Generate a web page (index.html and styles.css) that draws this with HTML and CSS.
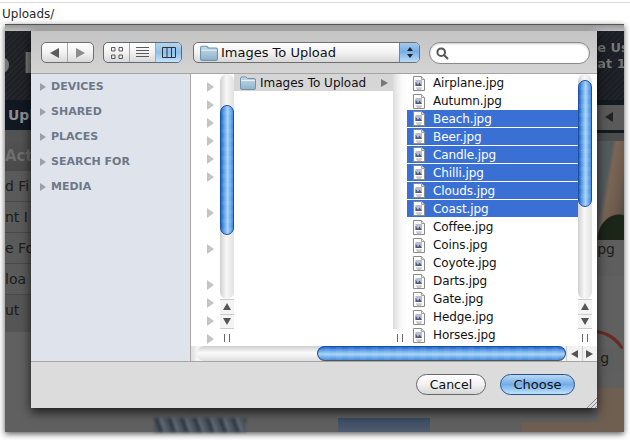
FILE: index.html
```html
<!DOCTYPE html>
<html lang="en">
<head>
<meta charset="utf-8">
<title>Uploads</title>
<link rel="stylesheet" href="styles.css">
</head>
<body>
<svg class="defs" width="0" height="0" aria-hidden="true">
  <defs>
    <linearGradient id="fold" x1="0" y1="0" x2="0" y2="1">
      <stop offset="0" stop-color="#c6dae8"/><stop offset="1" stop-color="#8fb2cb"/>
    </linearGradient>
    <symbol id="folder" viewBox="0 0 16 14">
      <path d="M.5 2.5Q.5 1 2 1H6L7.5 2.5H14Q15.5 2.500 15.500 4V12Q15.500 13.500 14 13.500H2Q.5 13.500 .5 12Z" fill="url(#fold)" stroke="#6f93ad"/>
      <path d="M1 4.500H15" stroke="#e6f0f6"/>
    </symbol>
    <symbol id="file" viewBox="0 0 12 15">
      <path d="M.5.5H8.500L11.500 3.500V14.500H.5Z" fill="#fff" stroke="#8a8a8a"/>
      <path d="M8.500.5V3.500H11.500" fill="#e4e4e4" stroke="#a0a0a0"/>
      <path d="M2.500 4H9V10H2.500Z" fill="#b8bfd0"/>
      <path d="M2.500 5.500L5 9L6.500 6.500L9 10H2.500Z" fill="#4d5a7e"/>
      <path d="M3 12H9M4 13.200H8" stroke="#9a9a9a" stroke-width=".8"/>
    </symbol>
  </defs>
</svg>

<header class="addressbar">Uploads/</header>

<main class="stage">
  <div class="strip"></div>
  <div class="backdrop">
    <aside class="bg-left">
      <div class="bg-logo"><span>o F</span></div>
      <div class="bg-tab">Upl</div>
      <div class="bg-gap"></div>
      <div class="bg-head">Acti</div>
      <div class="bg-row">d Fi</div>
      <div class="bg-row">nt I</div>
      <div class="bg-row">e Fo</div>
      <div class="bg-row">loa</div>
      <div class="bg-row">ut</div>
    </aside>
    <section class="bg-mid">
      <div class="bg-thumb bg-thumb-a"></div>
      <div class="bg-thumb bg-thumb-b"></div>
      <div class="bg-thumb bg-thumb-c"></div>
    </section>
    <aside class="bg-right">
      <div class="bg-promo"><span>e Us</span><span>at 15</span></div>
      <div class="bg-pager"><i class="bg-prev"></i></div>
      <div class="bg-gap-r"></div>
      <div class="bg-photo"></div>
      <div class="bg-cap">pg</div>
      <div class="bg-arc">
        <svg width="27" height="20" viewBox="0 0 27 20"><path d="M0 3Q14 5 24 19Q26 20 26 17Q18 3 0 0Z" fill="#6b2a20"/></svg>
      </div>
      <div class="bg-cap bg-cap-g">g</div>
      <div class="bg-tan"></div>
    </aside>
  </div>

  <div class="dialog">
    <div class="toolbar">
      <div class="seg seg-nav">
        <button class="seg-btn"><i class="tri tri-left"></i></button>
        <button class="seg-btn"><i class="tri tri-right"></i></button>
      </div>
      <div class="seg seg-view">
        <button class="seg-btn">
          <svg width="12" height="12" viewBox="0 0 12 12" fill="none" stroke="#5a5a5a"><path d="M.5.5h3.500v3.500h-3.500zM8 .5h3.500v3.500H8zM.5 8h3.500v3.500h-3.500zM8 8h3.500v3.500H8z"/></svg>
        </button>
        <button class="seg-btn">
          <svg width="13" height="11" viewBox="0 0 13 11" stroke="#5a5a5a"><path d="M0 .5h13M0 3.500h13M0 6.500h13M0 9.500h13"/></svg>
        </button>
        <button class="seg-btn seg-on">
          <svg width="14" height="11" viewBox="0 0 14 11" fill="none" stroke="#333"><path d="M.5.5h13v10H.5zM5 .5v10M9.500 .5v10"/></svg>
        </button>
      </div>
      <div class="popup">
        <svg class="ic-folder" width="18" height="16"><use href="#folder"/></svg>
        <span class="popup-label">Images To Upload</span>
        <span class="stepper"><i class="st-up"></i><i class="st-down"></i></span>
      </div>
      <div class="search">
        <svg width="13" height="13" viewBox="0 0 13 13" fill="none" stroke="#555" stroke-width="2"><circle cx="5.200" cy="5.200" r="3.800"/><path d="M8 8l4 4"/></svg>
      </div>
    </div>

    <div class="body">
      <nav class="sidebar">
        <div class="sb-item"><i class="sb-tri"></i>DEVICES</div>
        <div class="sb-item"><i class="sb-tri"></i>SHARED</div>
        <div class="sb-item"><i class="sb-tri"></i>PLACES</div>
        <div class="sb-item"><i class="sb-tri"></i>SEARCH FOR</div>
        <div class="sb-item"><i class="sb-tri"></i>MEDIA</div>
      </nav>
      <div class="browser">
        <div class="columns">
          <div class="col-chev">
            <i class="chev"></i><i class="chev"></i><i class="chev"></i><i class="chev"></i><i class="chev"></i><i class="chev"></i>
            <i class="chev chev-none"></i><i class="chev"></i><i class="chev chev-none"></i><i class="chev"></i><i class="chev chev-none"></i>
            <i class="chev"></i><i class="chev"></i><i class="chev"></i><i class="chev"></i>
          </div>
          <div class="vscroll">
            <div class="track"><div class="thumb thumb-a"></div></div>
            <div class="arrows"><span class="ar"><i class="ar-up"></i></span><span class="ar"><i class="ar-down"></i></span></div>
            <div class="grip"></div>
          </div>
          <div class="col-folders">
            <div class="folder-row">
              <svg class="ic-folder-s" width="16" height="14"><use href="#folder"/></svg>
              <span class="folder-name">Images To Upload</span>
              <i class="folder-chev"></i>
            </div>
          </div>
          <div class="vscroll vscroll-plain">
            <div class="track track-plain"></div>
            <div class="grip"></div>
          </div>
          <ul class="col-files">
            <li class="file"><svg width="12" height="15"><use href="#file"/></svg>Airplane.jpg</li>
            <li class="file"><svg width="12" height="15"><use href="#file"/></svg>Autumn.jpg</li>
            <li class="file sel"><svg width="12" height="15"><use href="#file"/></svg>Beach.jpg</li>
            <li class="file sel"><svg width="12" height="15"><use href="#file"/></svg>Beer.jpg</li>
            <li class="file sel"><svg width="12" height="15"><use href="#file"/></svg>Candle.jpg</li>
            <li class="file sel"><svg width="12" height="15"><use href="#file"/></svg>Chilli.jpg</li>
            <li class="file sel"><svg width="12" height="15"><use href="#file"/></svg>Clouds.jpg</li>
            <li class="file sel"><svg width="12" height="15"><use href="#file"/></svg>Coast.jpg</li>
            <li class="file"><svg width="12" height="15"><use href="#file"/></svg>Coffee.jpg</li>
            <li class="file"><svg width="12" height="15"><use href="#file"/></svg>Coins.jpg</li>
            <li class="file"><svg width="12" height="15"><use href="#file"/></svg>Coyote.jpg</li>
            <li class="file"><svg width="12" height="15"><use href="#file"/></svg>Darts.jpg</li>
            <li class="file"><svg width="12" height="15"><use href="#file"/></svg>Gate.jpg</li>
            <li class="file"><svg width="12" height="15"><use href="#file"/></svg>Hedge.jpg</li>
            <li class="file"><svg width="12" height="15"><use href="#file"/></svg>Horses.jpg</li>
            <li class="file"><svg width="12" height="15"><use href="#file"/></svg></li>
          </ul>
          <div class="vscroll">
            <div class="track"><div class="thumb thumb-c"></div></div>
            <div class="arrows"><span class="ar"><i class="ar-up"></i></span><span class="ar"><i class="ar-down"></i></span></div>
            <div class="grip"></div>
          </div>
          <div class="col-end"></div>
        </div>
        <div class="hscroll">
          <div class="htrack"><div class="hthumb"></div></div>
          <div class="harrows"><span class="har"><i class="har-left"></i></span><span class="har"><i class="har-right"></i></span></div>
        </div>
      </div>
    </div>

    <div class="footer">
      <button class="btn">Cancel</button>
      <button class="btn btn-primary">Choose</button>
      <svg class="resize" width="11" height="11" viewBox="0 0 11 11" stroke="#8a8a8a"><path d="M1 11L11 1M5 11L11 5M9 11L11 9"/></svg>
    </div>
  </div>
</main>
</body>
</html>
```
FILE: styles.css
```css
* { box-sizing: border-box; }
html, body { margin: 0; padding: 0; }
body {
  width: 630px;
  height: 440px;
  overflow: hidden;
  background: #fff;
  font-family: "DejaVu Sans", sans-serif;
  color: #111;
}
i { display: block; }
button { font-family: inherit; padding: 0; margin: 0; }
.defs { position: absolute; }

/* address bar */
.addressbar {
  height: 24px;
  padding: 5px 0 0 2px;
  font-size: 12px;
  line-height: 18px;
  color: #2a2a2a;
  background: linear-gradient(#fff 2px, #ddd 2px, #ddd 3px, #fff 3px);
}

/* stage and dimmed page */
.stage {
  position: relative;
  margin-left: 5px;
  width: 619px;
  height: 408px;
  display: flex;
  flex-direction: column;
  border-top: 1px solid #555;
  box-shadow: 0 2px 6px rgba(0,0,0,.65);
  background: #5f5f5f;
}
.strip { height: 6px; background: linear-gradient(#9a9a9a, #bdbdbd); }
.backdrop { flex: 1; display: flex; min-height: 0; }

.bg-left { width: 185px; display: flex; flex-direction: column; background: #606060; }
.bg-logo {
  height: 69px;
  background: repeating-linear-gradient(135deg, #24262c 0 2px, #1d1f25 2px 4px);
  padding-top: 17px;
  overflow: hidden;
}
.bg-logo span { font-size: 28px; font-weight: bold; color: #777; line-height: 32px; letter-spacing: 1.5px; margin-left: -14px; display: block; filter: blur(.6px); }
.bg-tab { height: 30px; background: #111822; color: #8b8f94; font-size: 14px; font-weight: bold; line-height: 30px; padding-left: 3px; }
.bg-gap { height: 11px; background: #535353; }
.bg-head { height: 30px; background: linear-gradient(#525252, #4a4a4a); color: #6e6e6e; font-size: 15px; font-weight: bold; line-height: 30px; filter: blur(.4px); }
.bg-row { height: 31px; color: #1c1c1c; font-size: 14px; line-height: 31px; background: #5a5a5a; border-bottom: 1px solid #494949; }
.bg-row:last-child { border-bottom: 0; height: 37px; background: #555; }

.bg-mid { flex: 1; display: flex; align-items: flex-end; gap: 92px; }
.bg-thumb { width: 92px; height: 14px; flex: none; }
.bg-thumb-a { background: repeating-linear-gradient(70deg, #4c5560 0 5px, #2f3742 5px 9px, #66707c 9px 12px); filter: blur(1.5px); margin-left: -35px; }
.bg-thumb-b { background: linear-gradient(#3a4a60, #4f5c6e); }
.bg-thumb-c { width: 75px; height: 10px; background: #6e5f50; }

.bg-right { width: 27px; display: flex; flex-direction: column; overflow: hidden; background: #5f5f5f; }
.bg-promo {
  height: 69px;
  background: repeating-linear-gradient(135deg, #20232a 0 2px, #1a1d23 2px 4px);
  padding-top: 9px;
  display: flex;
  flex-direction: column;
  color: #777;
  font-size: 13px;
  font-weight: bold;
  line-height: 16px;
  white-space: nowrap;
  filter: blur(.3px);
}
.bg-pager { height: 30px; background: #5a5a5a; border-top: 5px solid #141a22; padding: 7px 0 0 8px; }
.bg-prev { width: 0; height: 0; border: 5px solid transparent; border-right: 8px solid #222; border-left: 0; }
.bg-gap-r { height: 11px; background: linear-gradient(#141a22 3px, #4c4c4c 3px); }
.bg-photo {
  height: 99px;
  background:
    radial-gradient(ellipse 22px 26px at 22px 99px, #1b2518 0 96%, transparent 100%),
    linear-gradient(100deg, #535b5d 0 35%, #7a6656 45%, #6d5a4c 70%, #404a40 100%);
}
.bg-cap { height: 36px; color: #1d1d1d; font-size: 14px; line-height: 18px; background: #5e5e5e; }
.bg-arc { height: 72px; padding-top: 54px; background: #606060; }
.bg-arc svg { display: block; }
.bg-cap-g { height: 25px; padding-left: 3px; margin-top: 1px; }
.bg-tan { flex: 1; background: linear-gradient(#5f5f5f 14px, #6e5f50 14px); }

/* dialog */
.dialog {
  position: absolute;
  left: 26px;
  top: 6px;
  width: 566px;
  height: 377px;
  display: flex;
  flex-direction: column;
  background: #dcdcdc;
  box-shadow: 0 4px 10px rgba(0,0,0,.75);
}
.toolbar {
  height: 43px;
  flex: none;
  display: flex;
  align-items: flex-start;
  padding: 11px 0 0 10px;
  background: linear-gradient(#c4c4c4, #d4d4d4);
  border-bottom: 1px solid #a5a5a5;
}
.seg {
  display: flex;
  height: 21px;
  border: 1px solid #6f6f6f;
  border-radius: 5px;
  overflow: hidden;
  background: linear-gradient(#fff, #f2f2f2 50%, #d8d8d8);
}
.seg-nav { width: 53px; margin-right: 9px; }
.seg-view { width: 79px; margin-right: 11px; border-color: #5f6a78; }
.seg-btn {
  flex: 1;
  border: 0;
  border-right: 1px solid #a8a8a8;
  background: transparent;
  display: flex;
  align-items: center;
  justify-content: center;
}
.seg-btn:last-child { border-right: 0; }
.seg-on { background: linear-gradient(#b5d5f0, #8fc0ea 50%, #c4e4fb); }
.tri { width: 0; height: 0; border: 5px solid transparent; }
.tri-left { border-left: 0; border-right: 9px solid #5b5b5b; }
.tri-right { border-right: 0; border-left: 9px solid #8c8c8c; }

.popup {
  width: 227px;
  height: 21px;
  margin-right: 9px;
  display: flex;
  align-items: center;
  border: 1px solid #6f6f6f;
  border-radius: 5px;
  padding-left: 6px;
  overflow: hidden;
  background: linear-gradient(#fff, #f2f2f2 50%, #d8d8d8);
  font-size: 13px;
}
.ic-folder { flex: none; margin-right: 3px; }
.popup-label { flex: 1; white-space: nowrap; }
.stepper {
  width: 20px;
  height: 21px;
  flex: none;
  display: flex;
  flex-direction: column;
  align-items: center;
  justify-content: center;
  gap: 3px;
  background: linear-gradient(#a8cdf0, #78aee6 45%, #bfe2fb);
  border-left: 1px solid #6a86a6;
}
.st-up, .st-down { width: 0; height: 0; border: 3px solid transparent; }
.st-up { border-top: 0; border-bottom: 4px solid #222; }
.st-down { border-bottom: 0; border-top: 4px solid #222; }
.search {
  width: 161px;
  height: 22px;
  display: flex;
  align-items: center;
  padding-left: 6px;
  background: #fff;
  border: 1px solid #8a8a8a;
  border-radius: 11px;
  box-shadow: inset 0 1px 2px rgba(0,0,0,.2);
}

.body { height: 288px; flex: none; display: flex; border-bottom: 1px solid #a5a5a5; }
.sidebar {
  width: 160px;
  flex: none;
  background: #dfe4ec;
  border-right: 1px solid #aaa;
}
.sb-item {
  height: 25px;
  display: flex;
  align-items: center;
  gap: 5px;
  padding-left: 9px;
  font-size: 11px;
  font-weight: bold;
  color: #6d7888;
}
.sb-tri { width: 0; height: 0; border: 4px solid transparent; border-right: 0; border-left: 6px solid #9aa0aa; }

.browser { flex: 1; display: flex; flex-direction: column; min-width: 0; background: #fff; }
.columns { flex: 1; display: flex; min-height: 0; overflow: hidden; }
.col-chev { width: 29px; flex: none; padding: 8px 0 0 16px; }
.chev {
  width: 0; height: 0;
  margin-bottom: 8px;
  border: 5px solid transparent;
  border-right: 0;
  border-left: 7px solid #c4c4c4;
}
.chev-none { visibility: hidden; }

.vscroll { width: 14px; flex: none; display: flex; flex-direction: column; }
.track {
  height: 226px;
  background: linear-gradient(90deg, #d0d0d0, #f7f7f7 45%, #e2e2e2);
  border-radius: 7px;
}
.track-plain { flex: 1; height: auto; border-radius: 0; background: linear-gradient(90deg, #dcdcdc, #fafafa 60%, #fff); }
.thumb {
  width: 14px;
  border-radius: 7px;
  border: 1px solid #1a4fa6;
  background:
    repeating-linear-gradient(#0000 0 5px, rgba(255,255,255,.06) 5px 9px),
    linear-gradient(90deg, #1f63c8, #5d9fe6 25%, #a8d4f6 55%, #3f8ade);
}
.thumb-a { height: 130px; margin-top: 31px; }
.thumb-c { height: 127px; margin-top: 6px; }
.arrows { height: 30px; display: flex; flex-direction: column; border-top: 1px solid #ccc; border-bottom: 1px solid #ccc; background: #f4f4f4; }
.ar { flex: 1; display: flex; align-items: center; justify-content: center; }
.ar:first-child { border-bottom: 1px solid #ccc; }
.ar-up, .ar-down { width: 0; height: 0; border: 4px solid transparent; }
.ar-up { border-top: 0; border-bottom: 7px solid #555; }
.ar-down { border-bottom: 0; border-top: 7px solid #555; }
.grip { height: 17px; display: flex; justify-content: center; padding-top: 5px; background: #fff; }
.grip::before { content: ""; width: 4px; height: 8px; border-left: 1px solid #666; border-right: 1px solid #666; }

.col-folders { width: 159px; flex: none; }
.folder-row {
  height: 17px;
  display: flex;
  align-items: center;
  padding-left: 6px;
  background: #d6d6d6;
  font-size: 12px;
}
.ic-folder-s { flex: none; margin-right: 4px; }
.folder-name { flex: 1; white-space: nowrap; }
.folder-chev { width: 0; height: 0; margin-right: 5px; border: 4px solid transparent; border-right: 0; border-left: 7px solid #777; }

.col-files { width: 171px; flex: none; margin: 0; padding: 0; list-style: none; overflow: hidden; font-size: 12px; letter-spacing: -.1px; }
.file {
  height: 18px;
  display: flex;
  align-items: center;
  gap: 8px;
  padding-left: 6px;
  white-space: nowrap;
}
.file svg { flex: none; }
.sel { color: #fff; background: #3a70d4; border-bottom: 1px solid #fff; }
.col-end { flex: 1; }

.hscroll { height: 15px; flex: none; display: flex; padding-left: 6px; background: linear-gradient(90deg, #dcdcdc, #f4f4f4 6px); }
.htrack { width: 369px; flex: none; padding-left: 120px; background: linear-gradient(#cfcfcf, #fafafa 45%, #dedede); border-radius: 7px; }
.hthumb {
  width: 249px;
  height: 15px;
  border: 1px solid #1a4fa6;
  border-bottom-color: #555;
  border-radius: 8px;
  background:
    repeating-linear-gradient(90deg, #0000 0 6px, rgba(255,255,255,.06) 6px 12px),
    linear-gradient(#1f63c8, #5d9fe6 25%, #a8d4f6 55%, #3f8ade);
}
.harrows { flex: 1; display: flex; background: #f2f2f2; }
.har { flex: 1; display: flex; align-items: center; justify-content: center; border-left: 1px solid #ccc; }
.har-left, .har-right { width: 0; height: 0; border: 4px solid transparent; }
.har-left { border-left: 0; border-right: 7px solid #555; }
.har-right { border-right: 0; border-left: 7px solid #555; }

.footer {
  flex: 1;
  position: relative;
  display: flex;
  align-items: flex-start;
  justify-content: flex-end;
  gap: 14px;
  padding: 12px 22px 0 0;
  background: #dcdcdc;
}
.btn {
  width: 70px;
  height: 21px;
  font-size: 12.500px;
  color: #111;
  border: 1px solid #666;
  border-radius: 11px;
  background: linear-gradient(#fff, #f2f2f2 50%, #d6d6d6);
}
.btn-primary {
  width: 75px;
  font-size: 13px;
  border-color: #2a4f8e;
  background: linear-gradient(#b9d8f4, #73ade8 50%, #bde4fb);
}
.resize { position: absolute; right: 0; bottom: 0; }
```
